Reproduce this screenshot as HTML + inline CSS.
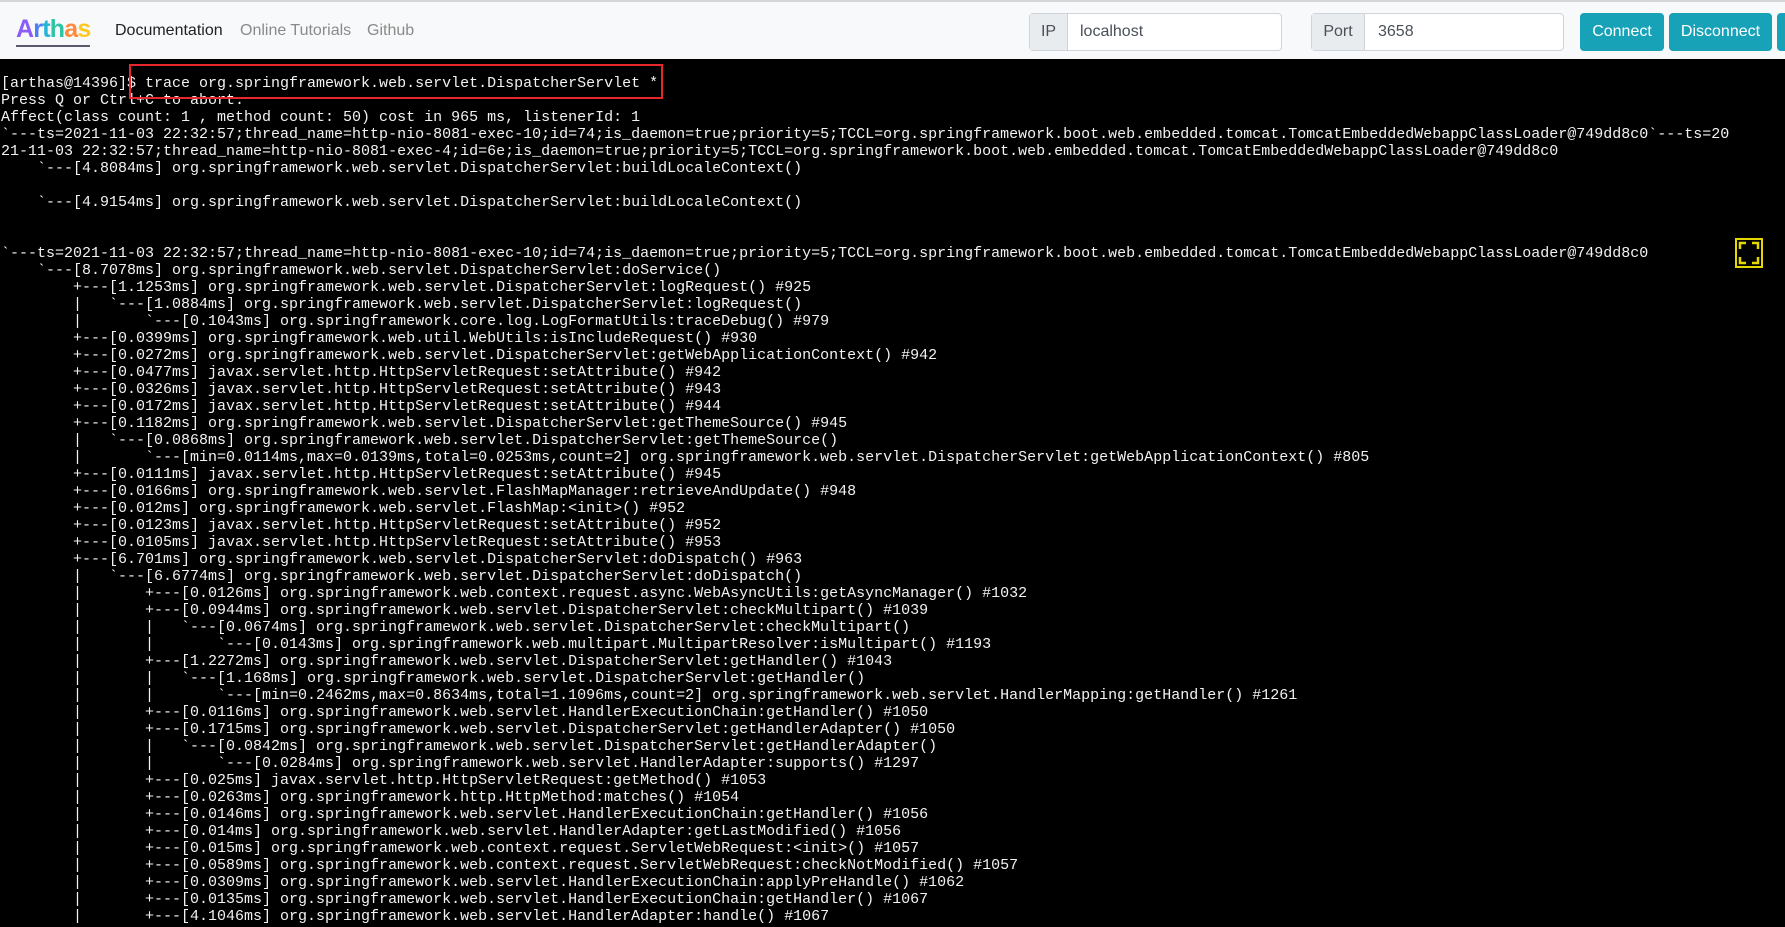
<!DOCTYPE html>
<html><head><meta charset="utf-8"><style>
*{margin:0;padding:0;box-sizing:border-box}
html,body{width:1785px;height:927px;overflow:hidden;background:#000}
.hdr{position:absolute;left:0;top:0;width:1785px;height:59px;background:#f8f9fa;border-top:2px solid #d6d6d6;font-family:"Liberation Sans",sans-serif}
.logo{position:absolute;left:16px;top:13px;font:bold 25px "Liberation Sans",sans-serif;letter-spacing:-0.8px;border-bottom:2px solid #5a5a6a;line-height:29px;padding-bottom:1px}
.nav{position:absolute;top:20px;font-size:16px}
.grp{position:absolute;top:11px;height:38px;border:1px solid #ced4da;border-radius:4px;background:#fff;font-size:16px;color:#495057}
.grp .ad{position:absolute;left:0;top:0;bottom:0;background:#e9ecef;border-right:1px solid #ced4da;text-align:center;line-height:36px}
.grp .v{position:absolute;top:0;line-height:36px}
.btn{position:absolute;top:11px;height:38px;background:#17a2b8;color:#fff;border-radius:4px;font-size:16px;line-height:38px;text-align:center}
pre{position:absolute;left:1px;top:75px;font:15px/17px "Liberation Mono",monospace;color:#f2f2f2;white-space:pre}
.box{position:absolute;left:129px;top:64px;width:534px;height:35px;border:2px solid #e8262b}
.fs{position:absolute;left:1735px;top:238px;width:28px;height:30px;border:2px solid #e5d700}
</style></head><body>
<div class="hdr">
<div class="logo"><span style="color:#8b5cf6">A</span><span style="color:#4f7cf7">r</span><span style="color:#22b6d6">t</span><span style="color:#2ec4a6">h</span><span style="color:#ff8a3d">a</span><span style="color:#ffc81f">s</span></div>
<div class="nav" style="left:115px;color:#222">Documentation</div>
<div class="nav" style="left:240px;color:#8a8a8a">Online Tutorials</div>
<div class="nav" style="left:367px;color:#8a8a8a">Github</div>
<div class="grp" style="left:1029px;width:253px"><div class="ad" style="width:38px">IP</div><div class="v" style="left:50px">localhost</div></div>
<div class="grp" style="left:1311px;width:253px"><div class="ad" style="width:53px">Port</div><div class="v" style="left:66px">3658</div></div>
<div class="btn" style="left:1580px;width:84px">Connect</div>
<div class="btn" style="left:1669px;width:103px">Disconnect</div>
<div class="btn" style="left:1777px;width:20px"></div>
</div>
<pre>[arthas@14396]$ trace org.springframework.web.servlet.DispatcherServlet *
Press Q or Ctrl+C to abort.
Affect(class count: 1 , method count: 50) cost in 965 ms, listenerId: 1
`---ts=2021-11-03 22:32:57;thread_name=http-nio-8081-exec-10;id=74;is_daemon=true;priority=5;TCCL=org.springframework.boot.web.embedded.tomcat.TomcatEmbeddedWebappClassLoader@749dd8c0`---ts=20
21-11-03 22:32:57;thread_name=http-nio-8081-exec-4;id=6e;is_daemon=true;priority=5;TCCL=org.springframework.boot.web.embedded.tomcat.TomcatEmbeddedWebappClassLoader@749dd8c0
    `---[4.8084ms] org.springframework.web.servlet.DispatcherServlet:buildLocaleContext()

    `---[4.9154ms] org.springframework.web.servlet.DispatcherServlet:buildLocaleContext()


`---ts=2021-11-03 22:32:57;thread_name=http-nio-8081-exec-10;id=74;is_daemon=true;priority=5;TCCL=org.springframework.boot.web.embedded.tomcat.TomcatEmbeddedWebappClassLoader@749dd8c0
    `---[8.7078ms] org.springframework.web.servlet.DispatcherServlet:doService()
        +---[1.1253ms] org.springframework.web.servlet.DispatcherServlet:logRequest() #925
        |   `---[1.0884ms] org.springframework.web.servlet.DispatcherServlet:logRequest()
        |       `---[0.1043ms] org.springframework.core.log.LogFormatUtils:traceDebug() #979
        +---[0.0399ms] org.springframework.web.util.WebUtils:isIncludeRequest() #930
        +---[0.0272ms] org.springframework.web.servlet.DispatcherServlet:getWebApplicationContext() #942
        +---[0.0477ms] javax.servlet.http.HttpServletRequest:setAttribute() #942
        +---[0.0326ms] javax.servlet.http.HttpServletRequest:setAttribute() #943
        +---[0.0172ms] javax.servlet.http.HttpServletRequest:setAttribute() #944
        +---[0.1182ms] org.springframework.web.servlet.DispatcherServlet:getThemeSource() #945
        |   `---[0.0868ms] org.springframework.web.servlet.DispatcherServlet:getThemeSource()
        |       `---[min=0.0114ms,max=0.0139ms,total=0.0253ms,count=2] org.springframework.web.servlet.DispatcherServlet:getWebApplicationContext() #805
        +---[0.0111ms] javax.servlet.http.HttpServletRequest:setAttribute() #945
        +---[0.0166ms] org.springframework.web.servlet.FlashMapManager:retrieveAndUpdate() #948
        +---[0.012ms] org.springframework.web.servlet.FlashMap:&lt;init&gt;() #952
        +---[0.0123ms] javax.servlet.http.HttpServletRequest:setAttribute() #952
        +---[0.0105ms] javax.servlet.http.HttpServletRequest:setAttribute() #953
        +---[6.701ms] org.springframework.web.servlet.DispatcherServlet:doDispatch() #963
        |   `---[6.6774ms] org.springframework.web.servlet.DispatcherServlet:doDispatch()
        |       +---[0.0126ms] org.springframework.web.context.request.async.WebAsyncUtils:getAsyncManager() #1032
        |       +---[0.0944ms] org.springframework.web.servlet.DispatcherServlet:checkMultipart() #1039
        |       |   `---[0.0674ms] org.springframework.web.servlet.DispatcherServlet:checkMultipart()
        |       |       `---[0.0143ms] org.springframework.web.multipart.MultipartResolver:isMultipart() #1193
        |       +---[1.2272ms] org.springframework.web.servlet.DispatcherServlet:getHandler() #1043
        |       |   `---[1.168ms] org.springframework.web.servlet.DispatcherServlet:getHandler()
        |       |       `---[min=0.2462ms,max=0.8634ms,total=1.1096ms,count=2] org.springframework.web.servlet.HandlerMapping:getHandler() #1261
        |       +---[0.0116ms] org.springframework.web.servlet.HandlerExecutionChain:getHandler() #1050
        |       +---[0.1715ms] org.springframework.web.servlet.DispatcherServlet:getHandlerAdapter() #1050
        |       |   `---[0.0842ms] org.springframework.web.servlet.DispatcherServlet:getHandlerAdapter()
        |       |       `---[0.0284ms] org.springframework.web.servlet.HandlerAdapter:supports() #1297
        |       +---[0.025ms] javax.servlet.http.HttpServletRequest:getMethod() #1053
        |       +---[0.0263ms] org.springframework.http.HttpMethod:matches() #1054
        |       +---[0.0146ms] org.springframework.web.servlet.HandlerExecutionChain:getHandler() #1056
        |       +---[0.014ms] org.springframework.web.servlet.HandlerAdapter:getLastModified() #1056
        |       +---[0.015ms] org.springframework.web.context.request.ServletWebRequest:&lt;init&gt;() #1057
        |       +---[0.0589ms] org.springframework.web.context.request.ServletWebRequest:checkNotModified() #1057
        |       +---[0.0309ms] org.springframework.web.servlet.HandlerExecutionChain:applyPreHandle() #1062
        |       +---[0.0135ms] org.springframework.web.servlet.HandlerExecutionChain:getHandler() #1067
        |       +---[4.1046ms] org.springframework.web.servlet.HandlerAdapter:handle() #1067
</pre>
<div class="box"></div>
<div class="fs"><svg width="24" height="26" viewBox="0 0 24 26" style="display:block"><path d="M3 9V3h6M15 3h6v6M21 17v6h-6M9 23H3v-6" fill="none" stroke="#e5d700" stroke-width="2.5"/></svg></div>
</body></html>
